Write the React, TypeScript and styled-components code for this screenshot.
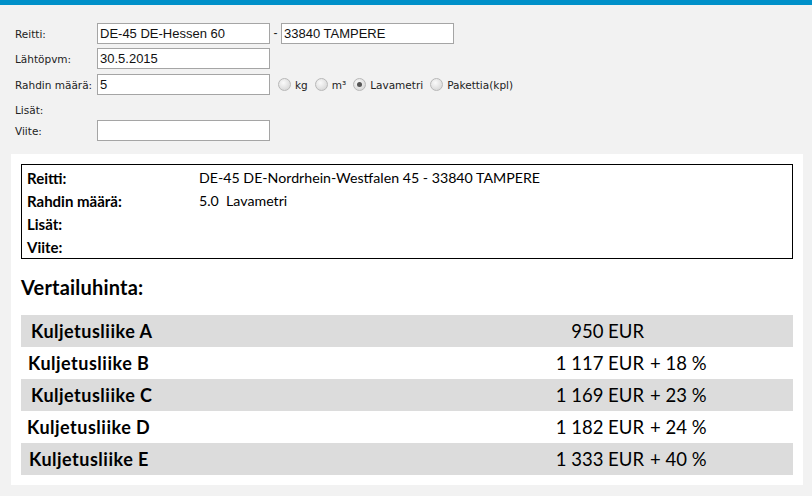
import React from "react";
import styled, { createGlobalStyle } from "styled-components";

const GlobalStyle = createGlobalStyle`
  html, body {
    margin: 0;
    padding: 0;
    background: #f2f2f2;
  }
`;

const Page = styled.div`
  width: 812px;
  min-height: 496px;
  background: #f2f2f2;
`;

const TopBar = styled.div`
  height: 5px;
  background: #0090c9;
`;

const FormContainer = styled.div`
  display: flex;
  flex-direction: column;
  padding: 18px 0 0 15px;
`;

const FormRow = styled.div<{ $height?: number }>`
  display: flex;
  flex-direction: row;
  align-items: flex-start;
  height: ${({ $height }) => $height ?? 21}px;
`;

const FormLabel = styled.span`
  width: 82px;
  line-height: 22px;
  color: #222;
  font-family: "DejaVu Sans", sans-serif;
  font-size: 10.5px;
`;

const TextInput = styled.input`
  box-sizing: border-box;
  width: 173px;
  height: 21px;
  border: 1px solid #a5a5a5;
  background: white;
  padding: 0 2px;
  margin: 0;
  font-family: "Liberation Sans", Arial, sans-serif;
  font-size: 13px;
  color: #111;
  outline: none;
`;

const Dash = styled.span`
  width: 11px;
  line-height: 21px;
  text-align: center;
  font-family: "Liberation Sans", Arial, sans-serif;
  font-size: 12px;
  color: #222;
`;

const RadioGroup = styled.div`
  display: flex;
  flex-direction: row;
  align-items: center;
  height: 21px;
  margin-left: 8px;
`;

const RadioLabel = styled.label`
  display: flex;
  align-items: center;
  gap: 4px;
  margin-right: 7px;
  font-family: "DejaVu Sans", sans-serif;
  font-size: 10.5px;
  color: #222;
`;

const Radio = styled.input.attrs({ type: "radio" })`
  appearance: none;
  box-sizing: border-box;
  width: 13px;
  height: 13px;
  margin: 0;
  border-radius: 50%;
  border: 1px solid #b8b8b8;
  background: radial-gradient(circle at 40% 35%, #fafafa 0%, #dcdcdc 70%, #cfcfcf 100%);
  position: relative;

  &:checked::after {
    content: "";
    position: absolute;
    left: 3px;
    top: 3px;
    width: 5px;
    height: 5px;
    border-radius: 50%;
    background: #555;
  }
`;

const Panel = styled.div`
  margin: 13px 9px 11px 11px;
  background: white;
  padding: 10px;
  display: flex;
  flex-direction: column;
`;

const SummaryBox = styled.div`
  border: 1px solid #000;
  padding: 1px 5px 0px 5px;
  display: flex;
  flex-direction: column;
`;

const SummaryRow = styled.div`
  display: flex;
  flex-direction: row;
  align-items: center;
  height: 23px;
  font-family: Lato, "Open Sans", sans-serif;
  font-size: 14.2px;
  color: #000;
`;

const SummaryLabel = styled.span`
  width: 172px;
  font-size: 15px;
  font-weight: bold;
`;

const SummaryValue = styled.span`
  white-space: pre;
`;

const Heading = styled.h2`
  margin: 0;
  height: 56px;
  display: flex;
  align-items: center;
  font-family: Lato, "Open Sans", sans-serif;
  font-size: 20px;
  letter-spacing: 0.2px;
  font-weight: bold;
  color: #000;
`;

const PriceTable = styled.div`
  display: flex;
  flex-direction: column;
`;

const PriceRow = styled.div<{ $shaded?: boolean; $indent: number }>`
  display: flex;
  flex-direction: row;
  align-items: center;
  height: 32px;
  padding-left: ${({ $indent }) => $indent}px;
  background: ${({ $shaded }) => ($shaded ? "#dcdcdc" : "white")};
  font-family: Lato, "Open Sans", sans-serif;
  font-size: 18.5px;
  color: #000;
`;

const CompanyName = styled.span<{ $indent: number }>`
  width: ${({ $indent }) => 523 - $indent}px;
  font-size: 18px;
  letter-spacing: 0.5px;
  font-weight: bold;
`;

const Amount = styled.span`
  width: 100px;
  text-align: right;
  white-space: pre;
`;

const Extra = styled.span`
  margin-left: 6px;
  white-space: pre;
`;

const prices = [
  { name: "Kuljetusliike A", amount: "950 EUR", extra: "", indent: 10 },
  { name: "Kuljetusliike B", amount: "1 117 EUR", extra: "+ 18 %", indent: 7 },
  { name: "Kuljetusliike C", amount: "1 169 EUR", extra: "+ 23 %", indent: 10 },
  { name: "Kuljetusliike D", amount: "1 182 EUR", extra: "+ 24 %", indent: 6 },
  { name: "Kuljetusliike E", amount: "1 333 EUR", extra: "+ 40 %", indent: 8 },
];

export default function App() {
  return (
    <>
      <GlobalStyle />
      <Page>
        <TopBar />
        <FormContainer>
          <FormRow $height={25}>
            <FormLabel>Reitti:</FormLabel>
            <TextInput defaultValue="DE-45 DE-Hessen 60" />
            <Dash>-</Dash>
            <TextInput defaultValue="33840 TAMPERE" />
          </FormRow>
          <FormRow $height={26}>
            <FormLabel>Lähtöpvm:</FormLabel>
            <TextInput defaultValue="30.5.2015" />
          </FormRow>
          <FormRow $height={25}>
            <FormLabel>Rahdin määrä:</FormLabel>
            <TextInput defaultValue="5" />
            <RadioGroup>
              <RadioLabel>
                <Radio name="unit" />
                kg
              </RadioLabel>
              <RadioLabel>
                <Radio name="unit" />
                m³
              </RadioLabel>
              <RadioLabel>
                <Radio name="unit" defaultChecked />
                Lavametri
              </RadioLabel>
              <RadioLabel>
                <Radio name="unit" />
                Pakettia(kpl)
              </RadioLabel>
            </RadioGroup>
          </FormRow>
          <FormRow $height={21}>
            <FormLabel>Lisät:</FormLabel>
          </FormRow>
          <FormRow>
            <FormLabel>Viite:</FormLabel>
            <TextInput defaultValue="" />
          </FormRow>
        </FormContainer>
        <Panel>
          <SummaryBox>
            <SummaryRow>
              <SummaryLabel>Reitti:</SummaryLabel>
              <SummaryValue>DE-45 DE-Nordrhein-Westfalen 45 - 33840 TAMPERE</SummaryValue>
            </SummaryRow>
            <SummaryRow>
              <SummaryLabel>Rahdin määrä:</SummaryLabel>
              <SummaryValue>5.0  Lavametri</SummaryValue>
            </SummaryRow>
            <SummaryRow>
              <SummaryLabel>Lisät:</SummaryLabel>
            </SummaryRow>
            <SummaryRow>
              <SummaryLabel>Viite:</SummaryLabel>
            </SummaryRow>
          </SummaryBox>
          <Heading>Vertailuhinta:</Heading>
          <PriceTable>
            {prices.map((p, i) => (
              <PriceRow key={p.name} $shaded={i % 2 === 0} $indent={p.indent}>
                <CompanyName $indent={p.indent}>{p.name}</CompanyName>
                <Amount>{p.amount}</Amount>
                {p.extra && <Extra>{p.extra}</Extra>}
              </PriceRow>
            ))}
          </PriceTable>
        </Panel>
      </Page>
    </>
  );
}
